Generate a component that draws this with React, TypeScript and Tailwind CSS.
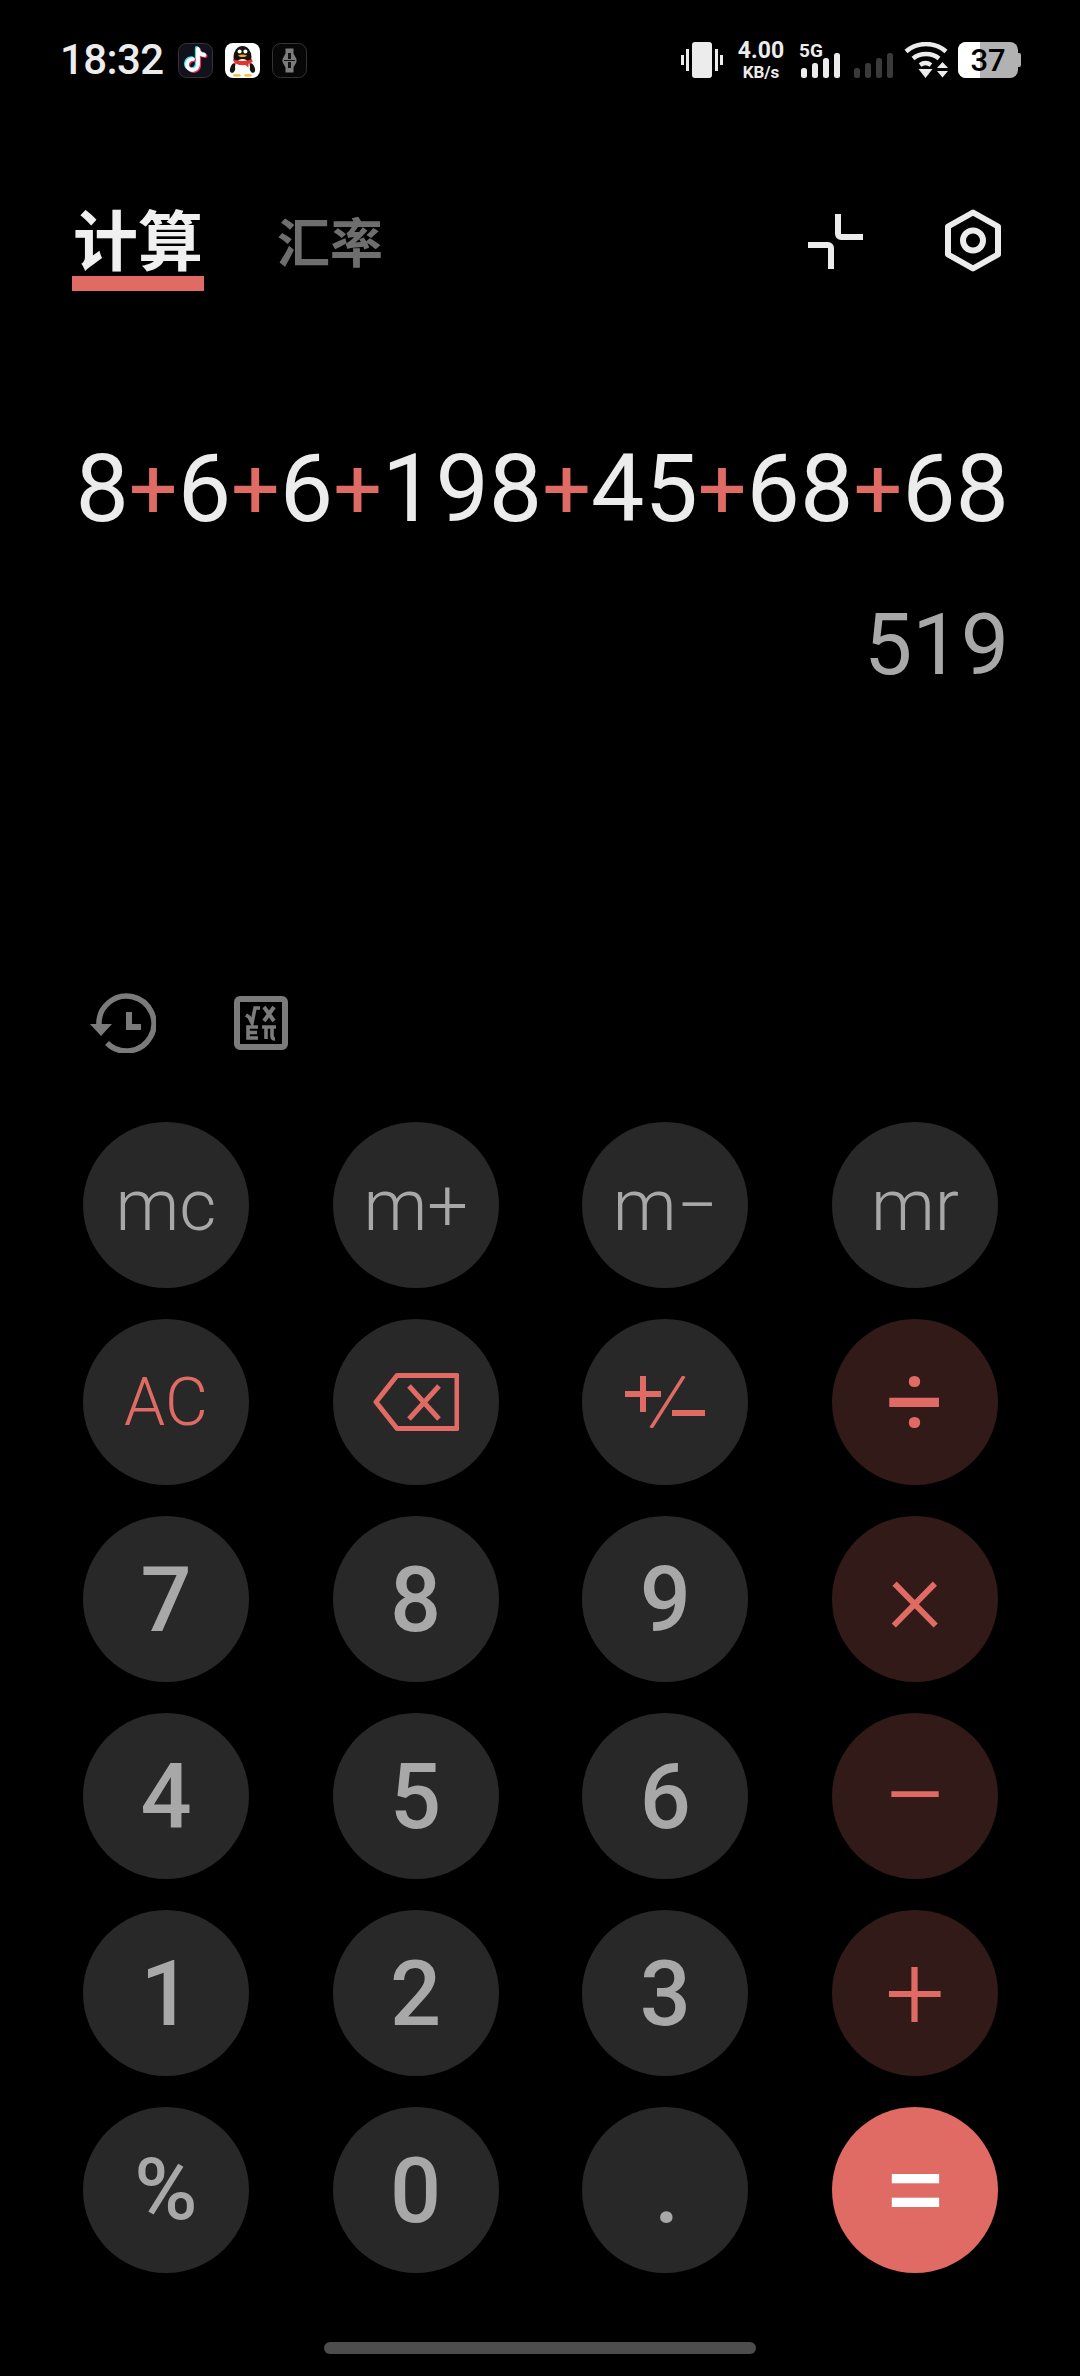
import React from "react";

const digitFont = "font-['Roboto',sans-serif]";

function TikTok() {
  const d = "M20 6v15.500a5.500 5.500 0 1 1-5-5.400M20 6c.4 3.200 2.600 5.600 6.400 6";
  return (
    <svg width="35" height="35" viewBox="0 0 35 35">
      <rect x="0.5" y="0.5" width="34" height="34" rx="8" fill="#11121c" stroke="#3a3038" />
      <g fill="none" strokeWidth="3.800" strokeLinecap="round">
        <path d={d} stroke="#37e3e6" transform="translate(-1.2,-1)" />
        <path d={d} stroke="#f0305c" transform="translate(1.2,1)" />
        <path d={d} stroke="#ffffff" />
      </g>
    </svg>
  );
}

function QQ() {
  return (
    <svg width="35" height="35" viewBox="0 0 35 35">
      <rect width="35" height="35" rx="8" fill="#ffffff" />
      <ellipse cx="17.5" cy="14" rx="9" ry="11" fill="#17130f" />
      <ellipse cx="8" cy="25" rx="2.600" ry="5" fill="#17130f" transform="rotate(20 8 25)" />
      <ellipse cx="27" cy="25" rx="2.600" ry="5" fill="#17130f" transform="rotate(-20 27 25)" />
      <ellipse cx="17.5" cy="24" rx="7.500" ry="8" fill="#ffffff" />
      <path d="M8 16c5 2.600 14 2.600 19 0l.6 3-4 1.800-.2 3.600-3-2.400c-2 .2-4 .2-6 0C11 21 8 19 8 16z" fill="#e5322d" />
      <circle cx="14.600" cy="8.600" r="2" fill="#fff" />
      <circle cx="20.400" cy="8.600" r="2" fill="#fff" />
      <path d="M13 12.400c2.800-1.200 6.200-1.200 9 0-2 2-7 2-9 0z" fill="#f5a623" />
      <ellipse cx="12" cy="32.400" rx="4" ry="1.400" fill="#f5c04a" />
      <ellipse cx="23" cy="32.400" rx="4" ry="1.400" fill="#f5c04a" />
    </svg>
  );
}

function Third() {
  return (
    <svg width="35" height="35" viewBox="0 0 35 35">
      <rect x="0.5" y="0.5" width="34" height="34" rx="8" fill="#070707" stroke="#333" />
      <path d="M13.500 5.500h8v5l3 5.500v3l-3 5.500v5h-8v-5l-3-5.500v-3l3-5.500z" fill="#7c7c7c" />
      <path d="M16 10h3v6l-3 0zM16 19h3v6h-3z" fill="#111" />
      <path d="M12 17.500h11" stroke="#111" />
    </svg>
  );
}

function Vibrate() {
  return (
    <svg width="42" height="36" viewBox="0 0 42 36">
      <rect x="11" y="0" width="20" height="36" rx="3" fill="#ececec" />
      <rect x="0" y="13" width="3" height="10" fill="#ececec" />
      <rect x="5" y="7" width="3" height="22" fill="#ececec" />
      <rect x="34" y="7" width="3" height="22" fill="#ececec" />
      <rect x="39" y="13" width="3" height="10" fill="#ececec" />
    </svg>
  );
}

function Bars({ color }: { color: string }) {
  return (
    <svg width="40" height="25" viewBox="0 0 40 25">
      <rect x="0" y="15" width="6" height="10" rx="2.500" fill={color} />
      <rect x="11" y="10" width="6" height="15" rx="2.500" fill={color} />
      <rect x="22" y="5" width="6" height="20" rx="2.500" fill={color} />
      <rect x="33" y="0" width="6" height="25" rx="2.500" fill={color} />
    </svg>
  );
}

function Wifi() {
  return (
    <svg width="44" height="36" viewBox="0 0 44 36">
      <g fill="none" stroke="#ececec" strokeWidth="4.400">
        <path d="M2 9.500C13-.5 31-.5 42 9.500" />
        <path d="M9 16.500c7-6 19-6 26 0" />
        <path d="M16 23c3.500-2.500 7.500-2.500 11 0" />
      </g>
      <path d="M14.500 27h14L21.500 36z" fill="#ececec" />
      <path d="M33 26h11l-5.500-6zM33 29h11l-5.500 6.500z" fill="#ececec" />
    </svg>
  );
}

function Battery() {
  return (
    <div className="relative h-[36px] w-[63px]">
      <div className="absolute left-0 top-0 h-[36px] w-[60px] overflow-hidden rounded-[8px] bg-[#b2b2b2]">
        <div className="h-full w-[22px] bg-white" />
      </div>
      <div className="absolute right-0 top-[11px] h-[14px] w-[3px] rounded-r-[2px] bg-[#b2b2b2]" />
      <div className="absolute left-0 top-0 flex h-[36px] w-[60px] items-center justify-center font-['Roboto',sans-serif] text-[31px] font-medium leading-none text-black">
        37
      </div>
    </div>
  );
}

function StatusBar() {
  return (
    <div className="flex h-[36px] items-center pl-[60px]">
      <div className="w-[118px] font-['Roboto',sans-serif] text-[42px] font-medium leading-none tracking-[-0.6px] text-[#ececec]">
        18:32
      </div>
      <div className="flex gap-[12px]">
        <TikTok />
        <QQ />
        <Third />
      </div>
      <div className="ml-[374px]"><Vibrate /></div>
      <div className="ml-[13px] flex w-[50px] flex-col items-center font-['Roboto',sans-serif] font-bold leading-none text-[#ececec]">
        <span className="text-[23px] leading-[24px]">4.00</span>
        <span className="text-[17px] leading-[18px]">KB/s</span>
      </div>
      <div className="relative ml-[15px] h-[36px] w-[40px]">
        <span className="absolute left-[-2px] top-[0px] font-['Roboto',sans-serif] text-[19px] font-bold leading-[17px] text-[#ececec]">5G</span>
        <div className="absolute left-0 top-[11px]"><Bars color="#ececec" /></div>
      </div>
      <div className="ml-[13px] mt-[11px]"><Bars color="#3a3a3a" /></div>
      <div className="ml-[10px]"><Wifi /></div>
      <div className="ml-[10px]"><Battery /></div>
    </div>
  );
}

function TabBar() {
  return (
    <div className="mt-[126px] flex h-[86px] items-start pl-[72px] pr-[79px]">
      <div className="flex w-[132px] flex-col items-center">
        <div className="-mt-[6px] font-['Noto_Sans_CJK_SC',sans-serif] text-[65px] font-bold leading-[78px] text-[#f0f0f0]">计算</div>
        <div className="h-[15px] w-[132px] bg-[#e06a64]" />
      </div>
      <div className="ml-[73px] font-['Noto_Sans_CJK_SC',sans-serif] text-[53px] font-bold leading-[72px] text-[#6e6e6e]">汇率</div>
      <svg className="ml-auto mt-[10px]" width="55" height="55" viewBox="0 0 55 55" fill="none" stroke="#ececec" strokeWidth="6">
        <path d="M30 0v20a3 3 0 0 0 3 3h22" />
        <path d="M0 31h20a3 3 0 0 1 3 3v21" />
      </svg>
      <svg className="ml-[82px] mt-[5px]" width="56" height="63" viewBox="0 0 56 63" fill="none" stroke="#ececec" strokeWidth="6" strokeLinejoin="round">
        <path d="M28 3.500 53 17.500v28L28 59.500 3 45.500v-28z" />
        <circle cx="28" cy="31.500" r="10" />
      </svg>
    </div>
  );
}

function Display() {
  const parts = ["8", "6", "6", "198", "45", "68", "68"];
  return (
    <div className={`${digitFont} mt-[139px] pr-[71px] text-right font-normal`}>
      <div className="flex h-[120px] items-center justify-end text-[95px] leading-[120px] text-[#ececec]">
        {parts.map((p, i) => (
          <React.Fragment key={i}>
            {i > 0 && <span className="text-[86px] text-[#e06a64]">+</span>}
            <span>{p}</span>
          </React.Fragment>
        ))}
      </div>
      <div className="mt-[36px] h-[120px] text-[86px] leading-[120px] text-[#a8a8a8]">519</div>
    </div>
  );
}

function Tools() {
  return (
    <div className="mt-[288px] flex h-[60px] items-center pl-[90px]">
      <svg width="66" height="60" viewBox="0 0 66 60" fill="none">
        <path d="M9 32A27.500 27.500 0 1 1 17 50" stroke="#7b7b7b" strokeWidth="5.500" />
        <path d="M0 31h22L11 43z" fill="#7b7b7b" />
        <path d="M39 19v15h12" stroke="#7b7b7b" strokeWidth="6" />
      </svg>
      <svg className="ml-[78px]" width="54" height="54" viewBox="0 0 54 54" fill="none">
        <rect x="3" y="3" width="48" height="48" rx="3" stroke="#7b7b7b" strokeWidth="6" />
        <g stroke="#7b7b7b" strokeWidth="3.600">
          <path d="M12 19l3 2 3 6 3-15h5" />
          <path d="M30 11l10 14M40 11L30 25" strokeWidth="4" />
          <path d="M24 31H14v11h10M14 36.500h9" />
          <path d="M28 31h14M32 31v12M38 31v9c0 2 1 3 3 3" />
        </g>
      </svg>
    </div>
  );
}

function Key({ children, kind = "num" }: { children: React.ReactNode; kind?: "num" | "red" | "op" | "eq" }) {
  const skin =
    kind === "eq"
      ? "bg-[#e06a64] text-white"
      : kind === "op"
        ? "bg-[#311a18] text-[#e06a64]"
        : kind === "red"
          ? "bg-[#282828] text-[#e06a64]"
          : "bg-[#282828] text-[#a8a8a8]";
  return <div className={`flex h-[166px] w-[166px] items-center justify-center rounded-full ${skin}`}>{children}</div>;
}

function Keypad() {
  const mem = "text-[72px] font-[350] leading-none pt-[2px]";
  const dig = "text-[90px] font-medium leading-none pt-[4px]";
  return (
    <div className={`${digitFont} mt-[69px] grid grid-cols-[repeat(4,166px)] gap-x-[83.67px] gap-y-[31px] pl-[83px]`}>
      <Key><span className={mem}>mc</span></Key>
      <Key><span className={mem}>m+</span></Key>
      <Key><span className={mem}>m−</span></Key>
      <Key><span className={mem}>mr</span></Key>
      <Key kind="red"><span className="pt-[2px] text-[66px] font-[350] leading-none">AC</span></Key>
      <Key kind="red">
        <svg width="86" height="58" viewBox="0 0 86 58" fill="none" stroke="#e06a64" strokeWidth="5" strokeLinejoin="round">
          <path d="M84 2.500H24L3 29l21 26.500h60z" />
          <path d="M36 13l30 33M66 13L36 46" />
        </svg>
      </Key>
      <Key kind="red">
        <svg width="80" height="52" viewBox="0 0 80 52" fill="none" stroke="#e06a64">
          <path d="M0 18h36M18 0v36" strokeWidth="6" />
          <path d="M59 0L26 52" strokeWidth="3.500" />
          <path d="M47 37h33" strokeWidth="6" />
        </svg>
      </Key>
      <Key kind="op"><span className="text-[102px] font-normal leading-none">÷</span></Key>
      <Key><span className={dig}>7</span></Key>
      <Key><span className={dig}>8</span></Key>
      <Key><span className={dig}>9</span></Key>
      <Key kind="op"><span className="pb-[6px] text-[108px] font-light leading-none">×</span></Key>
      <Key><span className={dig}>4</span></Key>
      <Key><span className={dig}>5</span></Key>
      <Key><span className={dig}>6</span></Key>
      <Key kind="op"><span className="text-[116px] font-light leading-none">−</span></Key>
      <Key><span className={dig}>1</span></Key>
      <Key><span className={dig}>2</span></Key>
      <Key><span className={dig}>3</span></Key>
      <Key kind="op"><span className="text-[106px] font-light leading-none">+</span></Key>
      <Key><span className="text-[86px] font-medium leading-none">%</span></Key>
      <Key><span className={dig}>0</span></Key>
      <Key><span className={`${dig} pl-[3px]`}>.</span></Key>
      <Key kind="eq"><span className="text-[116px] font-normal leading-none">=</span></Key>
    </div>
  );
}

export default function App() {
  return (
    <div className="h-[2376px] w-[1080px] overflow-hidden bg-black pt-[42px]">
      <StatusBar />
      <TabBar />
      <Display />
      <Tools />
      <Keypad />
      <div className="ml-[324px] mt-[69px] h-[12px] w-[432px] rounded-full bg-[#4d4d4d]" />
    </div>
  );
}
